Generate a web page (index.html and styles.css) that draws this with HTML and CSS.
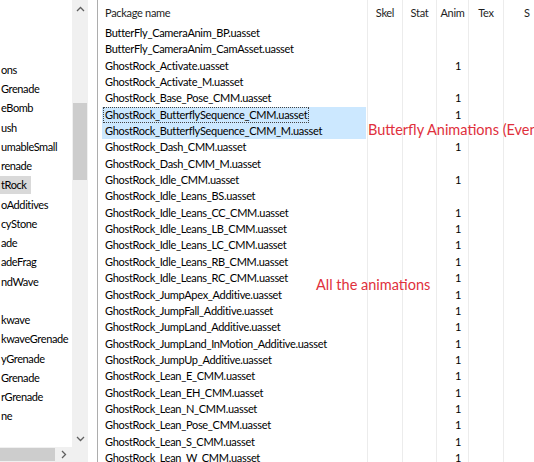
FILE: index.html
```html
<!DOCTYPE html>
<html>
<head>
<meta charset="utf-8">
<link rel="stylesheet" href="styles.css">
</head>
<body>
<div class="window">
  <div class="tree-pane">
    <div class="tree-main">
      <ul class="tree">
        <li></li>
        <li></li>
        <li></li>
        <li>ons</li>
        <li>Grenade</li>
        <li>eBomb</li>
        <li>ush</li>
        <li>umableSmall</li>
        <li>renade</li>
        <li class="sel"><span>tRock</span></li>
        <li>oAdditives</li>
        <li>cyStone</li>
        <li>ade</li>
        <li>adeFrag</li>
        <li>ndWave</li>
        <li></li>
        <li>kwave</li>
        <li>kwaveGrenade</li>
        <li>yGrenade</li>
        <li>Grenade</li>
        <li>rGrenade</li>
        <li>ne</li>
        <li></li>
      </ul>
      <div class="vscroll">
        <div class="arrow"><svg width="9" height="6" viewBox="0 0 9 6"><path d="M1 5 L4.5 1.5 L8 5" fill="none" stroke="#606060" stroke-width="1.3"/></svg></div>
        <div class="vtrack"><div class="vthumb"></div></div>
        <div class="arrow"><svg width="9" height="6" viewBox="0 0 9 6"><path d="M1 1 L4.5 4.5 L8 1" fill="none" stroke="#606060" stroke-width="1.3"/></svg></div>
      </div>
    </div>
    <div class="hscroll">
      <div class="hthumb"></div>
      <div class="arrow harrow"><svg width="6" height="9" viewBox="0 0 6 9"><path d="M1 1 L4.5 4.5 L1 8" fill="none" stroke="#606060" stroke-width="1.3"/></svg></div>
      <div class="corner"></div>
    </div>
  </div>
  <div class="splitter"></div>
  <div class="list-pane">
    <div class="row head">
      <div class="c name">Package name</div>
      <div class="c">Skel</div>
      <div class="c">Stat</div>
      <div class="c">Anim</div>
      <div class="c">Tex</div>
      <div class="c last">S</div>
    </div>
    <div class="row"><div class="c name"><span>ButterFly_CameraAnim_BP.uasset</span></div><div class="c"></div><div class="c"></div><div class="c num"></div><div class="c"></div><div class="c last"></div></div>
    <div class="row"><div class="c name"><span>ButterFly_CameraAnim_CamAsset.uasset</span></div><div class="c"></div><div class="c"></div><div class="c num"></div><div class="c"></div><div class="c last"></div></div>
    <div class="row"><div class="c name"><span>GhostRock_Activate.uasset</span></div><div class="c"></div><div class="c"></div><div class="c num">1</div><div class="c"></div><div class="c last"></div></div>
    <div class="row"><div class="c name"><span>GhostRock_Activate_M.uasset</span></div><div class="c"></div><div class="c"></div><div class="c num"></div><div class="c"></div><div class="c last"></div></div>
    <div class="row"><div class="c name"><span>GhostRock_Base_Pose_CMM.uasset</span></div><div class="c"></div><div class="c"></div><div class="c num">1</div><div class="c"></div><div class="c last"></div></div>
    <div class="row selected"><div class="c name"><span><em class="focus">GhostRock_ButterflySequence_CMM.uasset</em></span></div><div class="c"></div><div class="c"></div><div class="c num">1</div><div class="c"></div><div class="c last"></div></div>
    <div class="row selected"><div class="c name"><span>GhostRock_ButterflySequence_CMM_M.uasset</span></div><div class="c"></div><div class="c"></div><div class="c num"></div><div class="c"></div><div class="c last"></div></div>
    <div class="row"><div class="c name"><span>GhostRock_Dash_CMM.uasset</span></div><div class="c"></div><div class="c"></div><div class="c num">1</div><div class="c"></div><div class="c last"></div></div>
    <div class="row"><div class="c name"><span>GhostRock_Dash_CMM_M.uasset</span></div><div class="c"></div><div class="c"></div><div class="c num"></div><div class="c"></div><div class="c last"></div></div>
    <div class="row"><div class="c name"><span>GhostRock_Idle_CMM.uasset</span></div><div class="c"></div><div class="c"></div><div class="c num">1</div><div class="c"></div><div class="c last"></div></div>
    <div class="row"><div class="c name"><span>GhostRock_Idle_Leans_BS.uasset</span></div><div class="c"></div><div class="c"></div><div class="c num"></div><div class="c"></div><div class="c last"></div></div>
    <div class="row"><div class="c name"><span>GhostRock_Idle_Leans_CC_CMM.uasset</span></div><div class="c"></div><div class="c"></div><div class="c num">1</div><div class="c"></div><div class="c last"></div></div>
    <div class="row"><div class="c name"><span>GhostRock_Idle_Leans_LB_CMM.uasset</span></div><div class="c"></div><div class="c"></div><div class="c num">1</div><div class="c"></div><div class="c last"></div></div>
    <div class="row"><div class="c name"><span>GhostRock_Idle_Leans_LC_CMM.uasset</span></div><div class="c"></div><div class="c"></div><div class="c num">1</div><div class="c"></div><div class="c last"></div></div>
    <div class="row"><div class="c name"><span>GhostRock_Idle_Leans_RB_CMM.uasset</span></div><div class="c"></div><div class="c"></div><div class="c num">1</div><div class="c"></div><div class="c last"></div></div>
    <div class="row"><div class="c name"><span>GhostRock_Idle_Leans_RC_CMM.uasset</span></div><div class="c"></div><div class="c"></div><div class="c num">1</div><div class="c"></div><div class="c last"></div></div>
    <div class="row"><div class="c name"><span>GhostRock_JumpApex_Additive.uasset</span></div><div class="c"></div><div class="c"></div><div class="c num">1</div><div class="c"></div><div class="c last"></div></div>
    <div class="row"><div class="c name"><span>GhostRock_JumpFall_Additive.uasset</span></div><div class="c"></div><div class="c"></div><div class="c num">1</div><div class="c"></div><div class="c last"></div></div>
    <div class="row"><div class="c name"><span>GhostRock_JumpLand_Additive.uasset</span></div><div class="c"></div><div class="c"></div><div class="c num">1</div><div class="c"></div><div class="c last"></div></div>
    <div class="row"><div class="c name"><span>GhostRock_JumpLand_InMotion_Additive.uasset</span></div><div class="c"></div><div class="c"></div><div class="c num">1</div><div class="c"></div><div class="c last"></div></div>
    <div class="row"><div class="c name"><span>GhostRock_JumpUp_Additive.uasset</span></div><div class="c"></div><div class="c"></div><div class="c num">1</div><div class="c"></div><div class="c last"></div></div>
    <div class="row"><div class="c name"><span>GhostRock_Lean_E_CMM.uasset</span></div><div class="c"></div><div class="c"></div><div class="c num">1</div><div class="c"></div><div class="c last"></div></div>
    <div class="row"><div class="c name"><span>GhostRock_Lean_EH_CMM.uasset</span></div><div class="c"></div><div class="c"></div><div class="c num">1</div><div class="c"></div><div class="c last"></div></div>
    <div class="row"><div class="c name"><span>GhostRock_Lean_N_CMM.uasset</span></div><div class="c"></div><div class="c"></div><div class="c num">1</div><div class="c"></div><div class="c last"></div></div>
    <div class="row"><div class="c name"><span>GhostRock_Lean_Pose_CMM.uasset</span></div><div class="c"></div><div class="c"></div><div class="c num">1</div><div class="c"></div><div class="c last"></div></div>
    <div class="row"><div class="c name"><span>GhostRock_Lean_S_CMM.uasset</span></div><div class="c"></div><div class="c"></div><div class="c num">1</div><div class="c"></div><div class="c last"></div></div>
    <div class="row"><div class="c name"><span>GhostRock_Lean_W_CMM.uasset</span></div><div class="c"></div><div class="c"></div><div class="c num">1</div><div class="c"></div><div class="c last"></div></div>
    <div class="note note-butterfly">Butterfly Animations (Events)</div>
    <div class="note note-all">All the animations</div>
  </div>
</div>
</body>
</html>
```

FILE: styles.css
```css
html, body {
  margin: 0;
  padding: 0;
  background: #ffffff;
  overflow: hidden;
}
body {
  width: 534px;
  height: 462px;
  font-family: "Lato", "Noto Sans", sans-serif;
  font-size: 11px;
  letter-spacing: -0.3px;
  color: #000000;
}
.window {
  display: flex;
  width: 534px;
  height: 462px;
  overflow: hidden;
}

/* ---- left tree pane ---- */
.tree-pane {
  width: 88px;
  flex: none;
  display: flex;
  flex-direction: column;
  background: #ffffff;
}
.tree-main {
  flex: 1;
  display: flex;
  min-height: 0;
}
.tree {
  flex: 1;
  margin: 0;
  padding: 2px 0 0 0;
  list-style: none;
  overflow: hidden;
  font-size: 11px;
  letter-spacing: -0.4px;
}
.tree li {
  height: 19.25px;
  line-height: 19.25px;
  white-space: nowrap;
  padding-left: 1px;
}
.tree li.sel span {
  display: inline-block;
  background: #d9d9d9;
  height: 18px;
  line-height: 18px;
  padding: 0 4px 0 1px;
  margin-left: -1px;
}
.vscroll {
  width: 16px;
  flex: none;
  background: #f0f0f0;
  display: flex;
  flex-direction: column;
}
.arrow {
  height: 17px;
  flex: none;
  display: flex;
  align-items: center;
  justify-content: center;
}
.vtrack {
  flex: 1;
}
.vthumb {
  margin: 86px 1px 0 1px;
  height: 77px;
  background: #cdcdcd;
}
.hscroll {
  height: 15px;
  flex: none;
  display: flex;
  background: #f0f0f0;
}
.hthumb {
  width: 55px;
  margin: 1px 0;
  background: #cdcdcd;
}
.harrow {
  width: 17px;
  height: 15px;
}
.corner {
  width: 16px;
  background: #f0f0f0;
}
.splitter {
  width: 9px;
  flex: none;
  background: #ffffff;
}

/* ---- right list pane ---- */
.list-pane {
  flex: 1;
  min-width: 0;
  position: relative;
  overflow: hidden;
  border-left: 1px solid #adadad;
  background: #ffffff;
}
.row {
  display: grid;
  grid-template-columns: 270px 35px 34px 32px 35px 80px;
  height: 16.35px;
  line-height: 16.35px;
  white-space: nowrap;
}
.c {
  box-sizing: border-box;
  border-right: 1px solid #ececec;
  overflow: hidden;
}
.c.last {
  border-right: none;
}
.row.head {
  height: 25px;
  line-height: 26px;
  color: #1e1e1e;
}
.row.head .c {
  text-align: center;
}
.row.head .c.name {
  text-align: left;
  padding-left: 7px;
}
.row.head .c.last {
  text-align: left;
  padding-left: 20px;
}
.c.name {
  padding-left: 4px;
  padding-right: 1px;
}
.c.name span {
  display: block;
  padding-left: 3px;
  height: 100%;
}
.row.selected .c.name span {
  background: #cce8ff;
}
.focus {
  font-style: normal;
  display: inline-block;
  box-sizing: border-box;
  height: 16px;
  line-height: 14px;
  margin-left: -2px;
  padding: 0 1px;
  border: 1px dotted #444;
}
.c.num {
  text-align: right;
  padding-right: 7px;
}
.note {
  position: absolute;
  color: #e0303c;
  font-size: 14.5px;
  letter-spacing: 0;
  line-height: 16px;
  white-space: nowrap;
}
.note-butterfly {
  left: 270px;
  top: 122px;
}
.note-all {
  left: 218px;
  top: 277px;
}
```
